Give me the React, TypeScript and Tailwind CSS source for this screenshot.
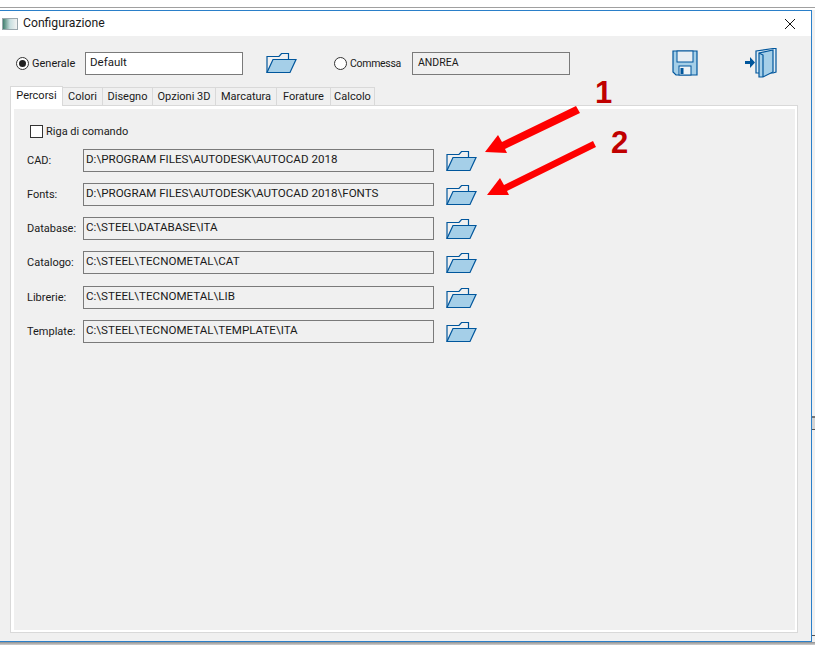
const font = "font-['Roboto','Liberation_Sans',sans-serif]";

const paths = [
  { label: "CAD:", value: "D:\\PROGRAM FILES\\AUTODESK\\AUTOCAD 2018", mt: "mt-0" },
  { label: "Fonts:", value: "D:\\PROGRAM FILES\\AUTODESK\\AUTOCAD 2018\\FONTS", mt: "mt-[11px]" },
  { label: "Database:", value: "C:\\STEEL\\DATABASE\\ITA", mt: "mt-[11px]" },
  { label: "Catalogo:", value: "C:\\STEEL\\TECNOMETAL\\CAT", mt: "mt-[11px]" },
  { label: "Librerie:", value: "C:\\STEEL\\TECNOMETAL\\LIB", mt: "mt-[12px]" },
  { label: "Template:", value: "C:\\STEEL\\TECNOMETAL\\TEMPLATE\\ITA", mt: "mt-[11px]" },
];

const tabs = [
  { name: "Colori", w: "w-[40px]" },
  { name: "Disegno", w: "w-[50px]" },
  { name: "Opzioni 3D", w: "w-[63px]" },
  { name: "Marcatura", w: "w-[61px]" },
  { name: "Forature", w: "w-[54px]" },
  { name: "Calcolo", w: "w-[44px]" },
];

function Folder() {
  return (
    <svg width="31" height="22" viewBox="0 0 31 22" className="shrink-0">
      <path d="M1 20.500V4.500H13L15.500 1.500H22.500V7" fill="none" stroke="#00569c" strokeWidth="1.200" />
      <path d="M7 7.500H30L24 20.500H1Z" fill="#a5cfe8" stroke="#00569c" strokeWidth="1.200" />
    </svg>
  );
}

function SaveIcon() {
  return (
    <svg width="26" height="26" viewBox="0 0 26 26">
      <path d="M1 1H25V25H4L1 22Z" fill="#a5cfe8" stroke="#00569c" strokeWidth="1.200" />
      <rect x="5" y="1" width="16" height="11" fill="#e8eef3" stroke="#00569c" />
      <rect x="7" y="16" width="12" height="9" fill="#eef3f6" stroke="#00569c" />
      <rect x="8.500" y="18" width="3" height="6" fill="#00569c" />
    </svg>
  );
}

function ExitIcon() {
  return (
    <svg width="32" height="31" viewBox="0 0 32 31">
      <path d="M0 14H5V10L10 15.500L5 21V17H0Z" fill="#00569c" />
      <path d="M11 4L28 1.500H31V25L28 26H11Z" fill="#dcebf5" stroke="#00569c" strokeWidth="1.200" />
      <path d="M14 6L28 3V25L18 30H14Z" fill="#a5cfe8" stroke="#00569c" strokeWidth="1.200" />
      <path d="M14 6L18 8V30" fill="none" stroke="#00569c" strokeWidth="1.200" />
    </svg>
  );
}

function Arrows() {
  return (
    <svg width="150" height="100" viewBox="0 0 150 100" className="absolute left-[484px] top-[100px]">
      <path d="M1 52L14 35L18 42L92 6L96 13L21 49L23 53Z" fill="#fe0000" />
      <path d="M3 95L16 78L20 85L109 41L112 47L23 91L25 95Z" fill="#fe0000" />
    </svg>
  );
}

export default function App() {
  return (
    <div className={`${font} relative flex h-[645px] w-[815px] flex-col overflow-hidden bg-white text-[11px] text-[#1a1a1a]`}>
      <div className="h-[7px] bg-white" />
      <div className="h-[1px] bg-[#a0a0a0]" />
      <div className="h-[2px] bg-white" />
      <div className="flex h-[632px]">
        <div className="flex w-[812px] flex-col border-t border-r border-b border-[#2a7fc9] bg-[#f0f0f0]">
          <div className="flex h-[25px] items-center bg-white pl-[2px] pr-[15px]">
            <div className="flex h-[12px] w-[16px] border border-[#9aa7ad] bg-gradient-to-r from-[#3f7f6f] via-[#c8dfe0] to-[#f3f3f3]" />
            <span className="ml-[5px] text-[12.200px]">Configurazione</span>
            <svg width="12" height="12" viewBox="0 0 12 12" className="ml-auto">
              <path d="M1 1L11 11M11 1L1 11" stroke="#111" strokeWidth="1" fill="none" />
            </svg>
          </div>
          <div className="flex h-[50px] items-center pl-[16px] pt-[4px]">
            <div className="flex h-[13px] w-[13px] items-center justify-center rounded-full border border-[#333] bg-white">
              <div className="h-[7px] w-[7px] rounded-full bg-[#222]" />
            </div>
            <span className="ml-[3px] w-[53px] pt-[2px]">Generale</span>
            <div className="flex h-[23px] w-[158px] items-start border border-[#7a7a7a] bg-white pl-[4px] pt-[1px] text-[11.500px]">Default</div>
            <div className="ml-[23px]"><Folder /></div>
            <div className="ml-[37px] flex h-[13px] w-[13px] rounded-full border border-[#333] bg-white" />
            <span className="ml-[3px] w-[62px] pt-[2px] text-[10.500px] tracking-[-0.3px]">Commessa</span>
            <div className="flex h-[23px] w-[158px] items-start border border-[#7a7a7a] pl-[5px] pt-[2px] text-[10.500px]">ANDREA</div>
            <div className="ml-[102px]"><SaveIcon /></div>
            <div className="ml-[47px] -mt-[2px]"><ExitIcon /></div>
          </div>
          <div className="ml-[10px] flex h-[19px] items-end">
            <div className="z-10 -mb-[1px] flex h-[20px] w-[53px] items-start justify-center border-x border-t border-[#d9d9d9] bg-white pt-[1px]">Percorsi</div>
            {tabs.map((tab) => (
              <div key={tab.name} className={`flex h-[18px] items-center justify-center border-t border-r border-[#d9d9d9] pt-[2px] ${tab.w}`}>
                {tab.name}
              </div>
            ))}
          </div>
          <div className="ml-[10px] h-[528px] w-[788px] border border-[#d9d9d9] bg-white p-[3px] pr-[2px] pb-[2px]">
            <div className="h-full bg-[#f0f0f0] pl-[12px] pt-[15px]">
              <div className="ml-[4px] flex h-[14px] items-center">
                <div className="h-[13px] w-[13px] border border-[#333] bg-white" />
                <span className="ml-[3px] pt-[2px]">Riga di comando</span>
              </div>
              <div className="mt-[11px] flex flex-col">
                {paths.map((row) => (
                  <div key={row.label} className={`flex h-[23px] items-center ${row.mt}`}>
                    <span className="w-[57px] pl-[1px] pt-[2px]">{row.label}</span>
                    <div className="flex h-[23px] w-[351px] items-start border border-[#7a7a7a] pl-[2px] pt-[1px] text-[11.600px]">
                      {row.value}
                    </div>
                    <div className="ml-[12px] pt-[1px]"><Folder /></div>
                  </div>
                ))}
              </div>
            </div>
          </div>
        </div>
        <div className="flex flex-1 flex-col bg-[#f0f0f0]">
          <div className="h-[406px]" />
          <div className="h-[14px] border-t-2 border-b border-t-[#777] border-b-[#555] bg-[#d4d4d4]" />
          <div className="h-[205px]" />
          <div className="h-[1px] bg-[#555]" />
        </div>
      </div>
      <div className="flex-1 bg-gradient-to-b from-[#8f8f8f] to-[#d0d0d0]" />
      <Arrows />
      <span className="absolute left-[595px] top-[70px] font-['Liberation_Sans',sans-serif] text-[31px] font-bold text-[#c00000]">1</span>
      <span className="absolute left-[611px] top-[120px] font-['Liberation_Sans',sans-serif] text-[31px] font-bold text-[#c00000]">2</span>
    </div>
  );
}
